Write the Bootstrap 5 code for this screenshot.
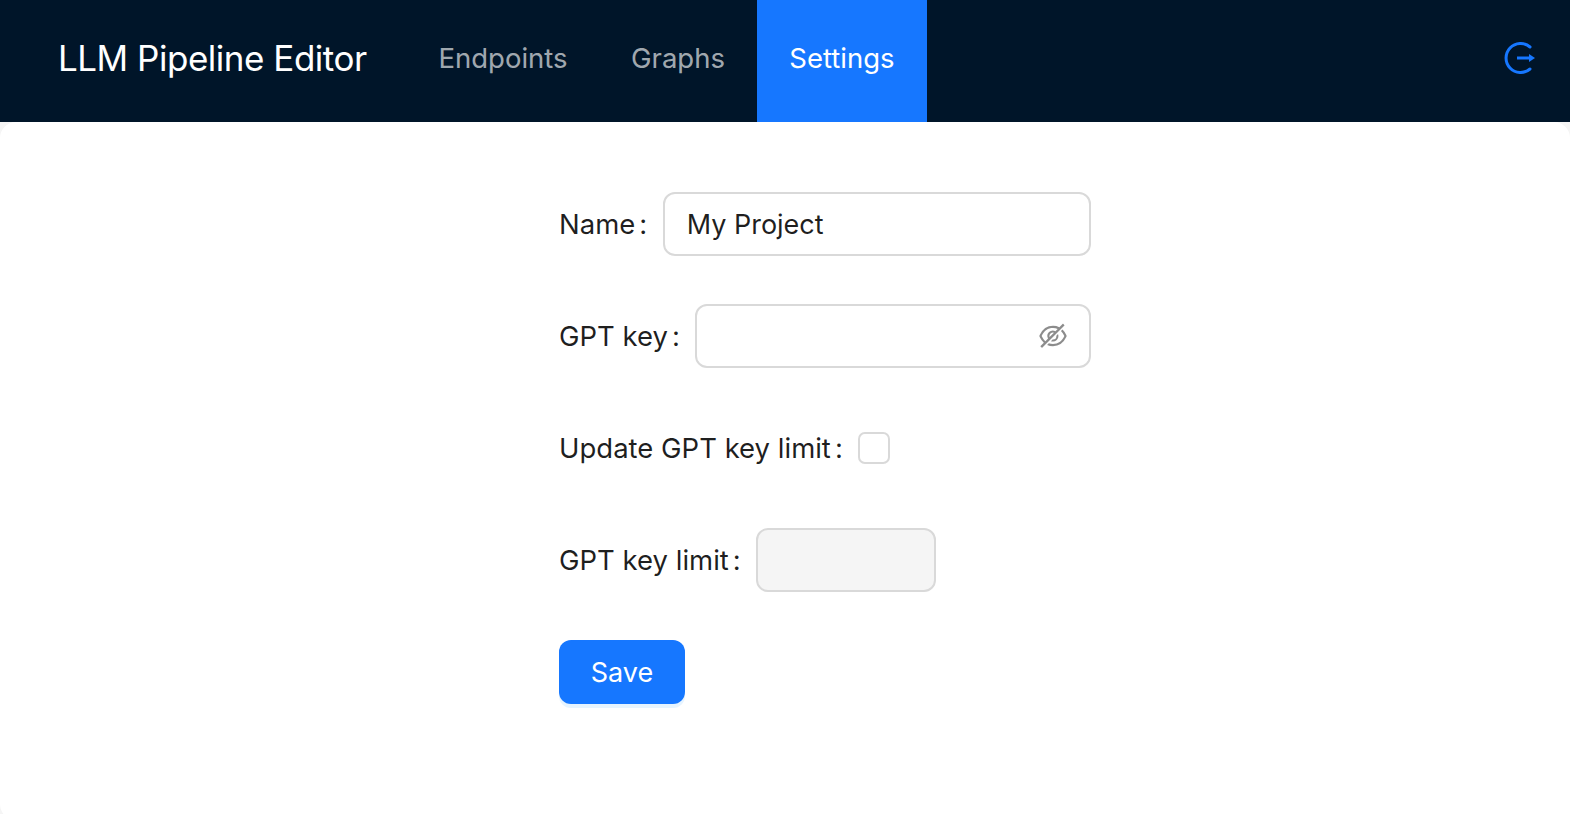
<!DOCTYPE html>
<html lang="en">
<head>
  <meta charset="UTF-8" />
  <title>LLM Pipeline Editor</title>
  <meta name="viewport" content="width=device-width, initial-scale=1" />
  <link href="https://cdn.jsdelivr.net/npm/bootstrap@5.3.3/dist/css/bootstrap.min.css" rel="stylesheet" />
  <style>
    body {
      background: #f5f5f5;
      font-family: Inter, "Noto Sans", sans-serif;
      font-size: 27.5px;
      color: rgba(0, 0, 0, .88);
      height: 814px;
      overflow: hidden;
    }
    .top-bar {
      height: 122px;
      background: #001529;
      padding: 0 35px 0 58px;
    }
    .app-title {
      color: #fff;
      font-size: 35px;
      letter-spacing: -.48px;
      margin: 0 40px 5px 0;
    }
    .menu-link {
      display: flex;
      align-items: center;
      height: 122px;
      padding: 0 31.75px 5px;
      color: rgba(255, 255, 255, .65);
      text-decoration: none;
    }
    .menu-link.current {
      padding: 0 32.5px 5px;
      background: #1677ff;
      color: #fff;
    }
    .logout-link {
      margin-bottom: 6px;
    }
    .page-body {
      height: 698px;
      background: #fff;
      border-radius: 16px 16px 0 16px;
      padding: 70px 0 0 559px;
    }
    .settings-form {
      width: 532px;
      gap: 48px;
    }
    .form-line {
      height: 64px;
    }
    .form-line label {
      padding-top: 2px;
      white-space: nowrap;
    }
    .form-line label::after {
      content: ":";
      margin: 0 15.4px 0 4px;
    }
    .field {
      height: 64px;
      border: 2px solid #d9d9d9;
      border-radius: 12px;
      padding: 0 22px;
      font-size: 27px;
      color: rgba(0, 0, 0, .88);
      box-shadow: none;
    }
    .field-small {
      width: 180px;
      flex: none;
    }
    .field-small:disabled {
      background: #f5f5f5;
    }
    .secret-field {
      height: 64px;
      border: 2px solid #d9d9d9;
      border-radius: 12px;
      padding-right: 22px;
    }
    .secret-field svg {
      flex: none;
      width: 28px;
      height: 28px;
      fill: rgba(0, 0, 0, .45);
    }
    .tick-box {
      width: 32px;
      height: 32px;
      margin: 0;
      border: 2px solid #d9d9d9;
      border-radius: 8px;
    }
    .save-btn {
      width: 126px;
      height: 64px;
      padding: 2px 0 0;
      font-size: 27px;
      background: #1677ff;
      border: 0;
      border-radius: 12px;
      box-shadow: 0 4px 0 rgba(5, 145, 255, .1);
    }
  </style>
</head>
<body>
  <header class="top-bar d-flex align-items-center">
    <div class="app-title">LLM Pipeline Editor</div>
    <nav class="d-flex">
      <a class="menu-link" href="#">Endpoints</a>
      <a class="menu-link" href="#">Graphs</a>
      <a class="menu-link current" href="#">Settings</a>
    </nav>
    <a class="logout-link ms-auto d-flex" href="#" aria-label="Log out">
      <svg width="34" height="32" viewBox="0 0 34 32">
        <path d="M29 5a14.5 14.5 0 1 0 0 22" fill="none" stroke="#1677ff" stroke-width="3" stroke-linecap="round" />
        <path d="M16 16h14" fill="none" stroke="#1677ff" stroke-width="3" />
        <path d="M28 12l6 4-6 4z" fill="#1677ff" />
      </svg>
    </a>
  </header>

  <main class="page-body">
    <form class="settings-form d-flex flex-column">
      <div class="form-line d-flex align-items-center">
        <label for="projectName">Name</label>
        <input id="projectName" class="form-control field" type="text" value="My Project" />
      </div>
      <div class="form-line d-flex align-items-center">
        <label for="gptKey">GPT key</label>
        <div class="secret-field d-flex align-items-center flex-grow-1">
          <input id="gptKey" class="form-control border-0 bg-transparent shadow-none" type="password" />
          <svg viewBox="64 64 896 896" aria-hidden="true">
            <path d="M942.2 486.2Q889.47 375.11 816.7 305l-50.88 50.88C807.31 395.53 843.45 447.4 874.7 512 791.5 684.2 673.4 766 512 766q-72.67 0-133.87-22.38L323 798.75Q408 838 512 838q288.3 0 430.2-300.3a60.29 60.29 0 000-51.5zm-63.57-320.64L836 122.88a8 8 0 00-11.32 0L715.31 232.2Q624.86 186 512 186q-288.3 0-430.2 300.3a60.3 60.3 0 000 51.5q56.69 119.4 136.5 191.41L112.48 835a8 8 0 000 11.31L155.17 889a8 8 0 0011.31 0l712.15-712.12a8 8 0 000-11.32zM149.3 512C232.6 339.8 350.7 258 512 258c54.54 0 104.13 9.36 149.12 28.39l-70.3 70.3a176 176 0 00-238.13 238.13l-83.42 83.42C223.1 637.49 183.3 582.28 149.3 512zm246.7 0a112.11 112.11 0 01146.2-106.69L401.31 546.2A112 112 0 01396 512z" />
            <path d="M508 624c-3.46 0-6.87-.16-10.25-.47l-52.82 52.82a176.09 176.09 0 00227.42-227.42l-52.82 52.82c.31 3.38.47 6.79.47 10.25a111.94 111.94 0 01-112 112z" />
          </svg>
        </div>
      </div>
      <div class="form-line d-flex align-items-center">
        <label for="updateLimit">Update GPT key limit</label>
        <input id="updateLimit" class="form-check-input tick-box" type="checkbox" />
      </div>
      <div class="form-line d-flex align-items-center">
        <label for="keyLimit">GPT key limit</label>
        <input id="keyLimit" class="form-control field field-small" type="text" disabled />
      </div>
      <div>
        <button class="btn btn-primary save-btn" type="button">Save</button>
      </div>
    </form>
  </main>
  <script src="https://cdn.jsdelivr.net/npm/bootstrap@5.3.3/dist/js/bootstrap.bundle.min.js"></script>
</body>
</html>
